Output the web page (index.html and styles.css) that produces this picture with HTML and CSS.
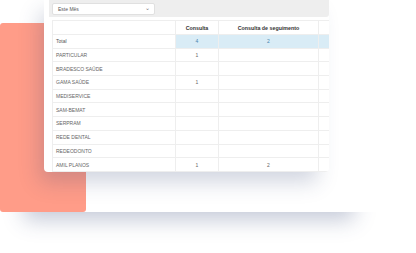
FILE: index.html
```html
<!DOCTYPE html>
<html lang="pt">
<head>
<meta charset="utf-8">
<link rel="stylesheet" href="styles.css">
</head>
<body>
<div class="stage">
  <div class="back-panel"></div>
  <div class="accent"></div>
  <div class="card">
    <div class="toolbar">
      <div class="select"><span>Este Mês</span><span class="chev">&#8964;</span></div>
    </div>
    <table class="report">
      <colgroup>
        <col class="c1"><col class="c2"><col class="c3"><col class="c4">
      </colgroup>
      <thead>
        <tr><th></th><th>Consulta</th><th>Consulta de seguimento</th><th></th></tr>
      </thead>
      <tbody>
        <tr class="total"><td>Total</td><td>4</td><td>2</td><td></td></tr>
        <tr><td>PARTICULAR</td><td>1</td><td></td><td></td></tr>
        <tr><td>BRADESCO SAÚDE</td><td></td><td></td><td></td></tr>
        <tr><td>GAMA SAÚDE</td><td>1</td><td></td><td></td></tr>
        <tr><td>MEDISERVICE</td><td></td><td></td><td></td></tr>
        <tr><td>SAM-BEMAT</td><td></td><td></td><td></td></tr>
        <tr><td>SERPRAM</td><td></td><td></td><td></td></tr>
        <tr><td>REDE DENTAL</td><td></td><td></td><td></td></tr>
        <tr><td>REDEODONTO</td><td></td><td></td><td></td></tr>
        <tr><td>AMIL PLANOS</td><td>1</td><td>2</td><td></td></tr>
      </tbody>
    </table>
  </div>
</div>
</body>
</html>
```

FILE: styles.css
```css
html, body {
  margin: 0;
  padding: 0;
  background: #ffffff;
}

.stage {
  position: relative;
  width: 416px;
  height: 253px;
  overflow: hidden;
  font-family: "Liberation Sans", Arial, sans-serif;
}

.back-panel {
  position: absolute;
  left: 0;
  top: 30px;
  width: 378px;
  height: 182px;
  background: #ffffff;
  box-shadow: 0 32px 20px -24px rgba(45, 65, 115, 0.28);
}

.accent {
  position: absolute;
  left: 0;
  top: 23px;
  width: 86px;
  height: 189px;
  background: #ff9c88;
  border-radius: 3px;
}

.card {
  position: absolute;
  left: 44px;
  top: -6px;
  width: 285px;
  height: 178px;
  background: #ffffff;
  border-radius: 0 0 4px 4px;
  box-shadow: -8px 14px 20px -4px rgba(45, 65, 115, 0.22);
  overflow: hidden;
  display: flex;
  flex-direction: column;
  padding-left: 5px;
  box-sizing: border-box;
}

.toolbar {
  background: #eeeeee;
  border-radius: 0 0 3px 0;
  padding: 9px 0 1.5px 3px;
  display: flex;
}

.select {
  width: 103px;
  height: 12px;
  box-sizing: border-box;
  background: #ffffff;
  border: 1px solid #e0e0e0;
  border-radius: 2px;
  display: flex;
  align-items: center;
  justify-content: space-between;
  padding: 0 4px 0 5px;
  font-size: 5px;
  color: #555555;
}

.chev {
  font-size: 6px;
  line-height: 1;
  margin-top: -3px;
  color: #777777;
}

.report {
  margin: 3.5px 0 0 3px;
  border-collapse: collapse;
  table-layout: fixed;
  width: 283px;
  font-size: 5px;
  color: #666666;
}

.c1 { width: 123px; }
.c2 { width: 43px; }
.c3 { width: 100px; }
.c4 { width: 17px; }

.report th,
.report td {
  border: 1px solid #eeeeee;
  height: 13.7px;
  padding: 0 3px;
  box-sizing: border-box;
  text-align: center;
  white-space: nowrap;
  overflow: hidden;
}

.report th {
  height: 14px;
  font-weight: bold;
  font-size: 5.3px;
  color: #333333;
}

.report td:first-child {
  text-align: left;
}

.report tr.total td {
  background: #d9ecf6;
  color: #4a86b0;
}

.report tr.total td:first-child {
  background: #ffffff;
  color: #555555;
}
```
